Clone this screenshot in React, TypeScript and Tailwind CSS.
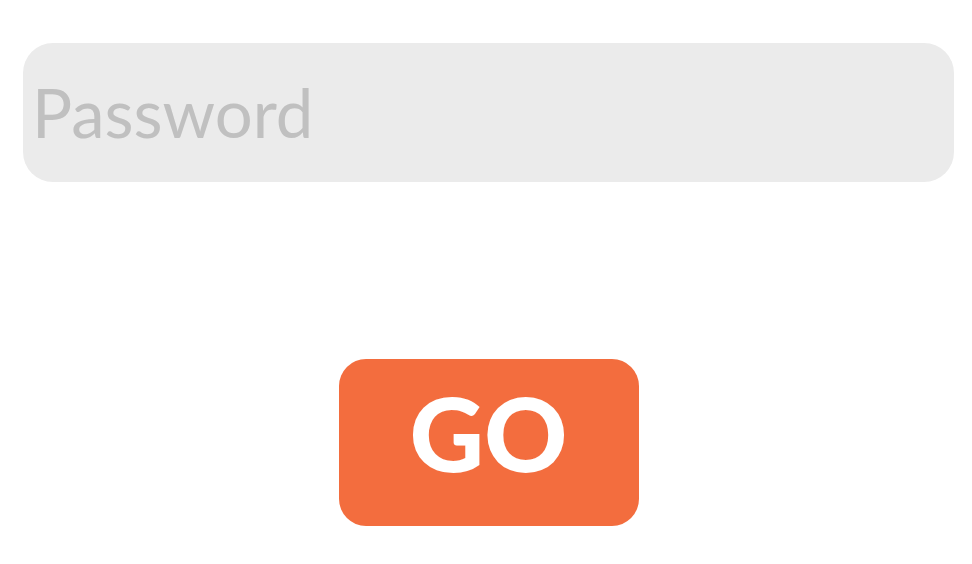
export default function App() {
  return (
    <div className="min-h-[564px] bg-white pt-[43px] pl-[23px] pr-[18px]">
      <input
        type="password"
        placeholder="Password"
        className="block h-[139px] w-full rounded-[30px] bg-[#ebebeb] px-[9px] pb-[2px] text-[67px] text-[#555] outline-none placeholder:text-[#c0c0c0]"
        style={{ fontFamily: "Lato, 'Open Sans', sans-serif" }}
      />
      <div className="mt-[177px] flex justify-center">
        <button
          type="button"
          className="flex h-[167px] w-[300px] items-center justify-center rounded-[27px] bg-[#f36d3e] pb-[20px] text-[103px] font-black leading-none text-white"
          style={{ fontFamily: "Lato, 'Open Sans', sans-serif" }}
        >
          GO
        </button>
      </div>
    </div>
  )
}
